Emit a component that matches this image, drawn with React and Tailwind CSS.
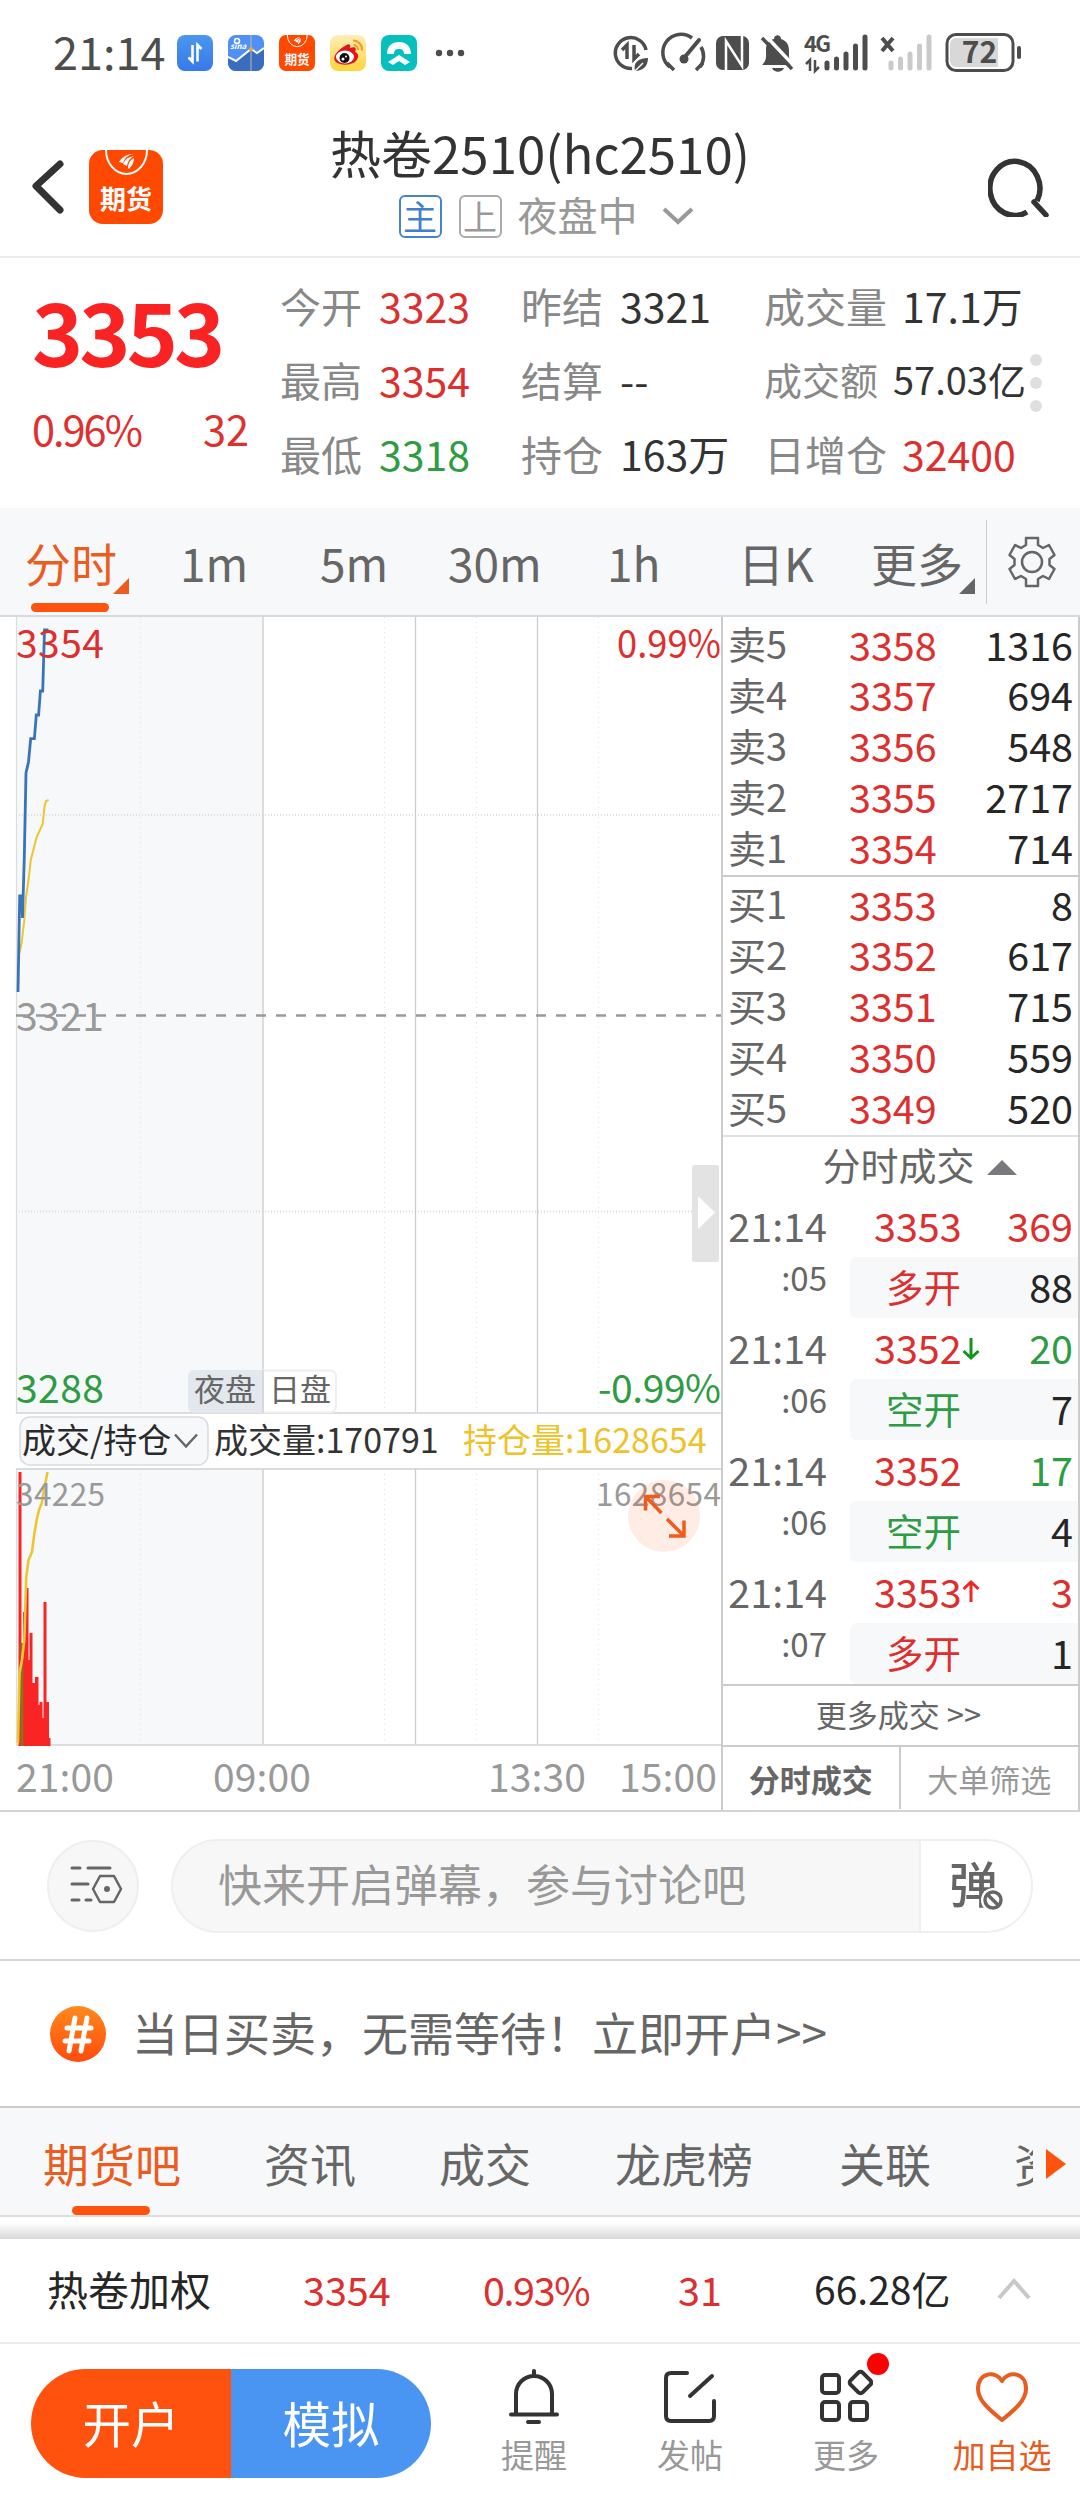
import { useState } from "react";

const SELLS = [
    ["卖5", "3358", "1316"],
    ["卖4", "3357", "694"],
    ["卖3", "3356", "548"],
    ["卖2", "3355", "2717"],
    ["卖1", "3354", "714"],
];

const BUYS = [
    ["买1", "3353", "8"],
    ["买2", "3352", "617"],
    ["买3", "3351", "715"],
    ["买4", "3350", "559"],
    ["买5", "3349", "520"],
];

const TRADES = [
    { sec: ":05", price: "3353", vol: "369", type: "多开", change: "88", up: true },
    { sec: ":06", price: "3352", vol: "20", type: "空开", change: "7", up: false, arrow: "down" },
    { sec: ":06", price: "3352", vol: "17", type: "空开", change: "4", up: false },
    { sec: ":07", price: "3353", vol: "3", type: "多开", change: "1", up: true, arrow: "up" },
];

// x, width, top of every volume bar
const VOLUME_BARS = [
    [18.5, 3, 1472],
    [23, 3, 1612],
    [25.5, 3, 1588],
    [28, 2, 1660],
    [29.5, 3, 1633],
    [32, 3.5, 1683],
    [35, 3.5, 1677],
    [38, 2, 1705],
    [39.5, 3, 1702],
    [42, 2, 1718],
    [43.5, 3, 1602],
    [46, 3, 1702],
    [48.5, 2, 1738],
];

function FuturesLogo({ className }) {
    return (
        <svg viewBox="0 0 74 74" className={className}>
            <rect width="74" height="74" rx="14" fill="#ff4800" />
            <path d="M17 0a20.500 24 0 0 0 41 0" fill="none" stroke="#fff" strokeWidth="2" />
            <path d="M30 12q5-8 14-8q-8 2-10 9zM34 14q3-7 11-8q-6 3-7 10zM39 18q0-7 6-10q0 6-5 11z" fill="#fff" />
            <text x="37" y="59" fontSize="26" fontWeight="700" fill="#fff" textAnchor="middle">期货</text>
        </svg>
    );
}

function StatusBar() {
    return (
        <div className="flex h-[105px] items-center text-[#4d4d4d]">
            <span className="w-[123px] pb-[3px] pl-[53px] text-[45px] leading-[1.3] whitespace-nowrap">21:14</span>
            <div className="ml-[54px] flex gap-[15px]">
                <svg viewBox="0 0 36 36" className="size-9">
                    <defs>
                        <linearGradient id="transfer" x1="0" y1="0" x2="0" y2="1">
                            <stop offset="0" stopColor="#4b97ee" />
                            <stop offset="1" stopColor="#3878ea" />
                        </linearGradient>
                    </defs>
                    <rect width="36" height="36" rx="8" fill="url(#transfer)" />
                    <path d="M15.500 10v16.500l-4-4M20.500 26.500V10l4 4" fill="none" stroke="#fff" strokeWidth="2.600" />
                </svg>
                <svg viewBox="0 0 36 36" className="size-9">
                    <rect width="36" height="36" rx="8" fill="#508ff4" />
                    <path d="M0 22l8 4 15-12 6 4 7-5v15a8 8 0 0 1-8 8H8a8 8 0 0 1-8-8z" fill="#3a6dc0" />
                    <path d="M0 22l8 4 15-12 6 4 7-5" fill="none" stroke="#fff" strokeWidth="2" />
                    <path d="M23 0v36" stroke="#c4b8a8" strokeWidth="1" />
                    <circle cx="23" cy="14" r="2" fill="#f0a030" />
                    <circle cx="9" cy="6" r="2.500" fill="none" stroke="#fff" strokeWidth="1.500" />
                    <text x="2" y="14" fontSize="8" fontStyle="italic" fontWeight="700" fill="#fff">sina</text>
                </svg>
                <FuturesLogo className="size-9" />
                <svg viewBox="0 0 36 36" className="size-9">
                    <defs>
                        <linearGradient id="weibo" x1="0" y1="0" x2="0" y2="1">
                            <stop offset="0" stopColor="#fdeebb" />
                            <stop offset="1" stopColor="#ffd43a" />
                        </linearGradient>
                    </defs>
                    <rect width="36" height="36" rx="8" fill="url(#weibo)" />
                    <path d="M15 11c4-3 6-2 5 2 5-2 7 0 5 4 4 1 4 6 1 9-5 5-17 5-21 0-3-5 4-12 10-15z" fill="#e4141c" />
                    <ellipse cx="15" cy="22" rx="9" ry="6.500" fill="#fff" />
                    <circle cx="14.500" cy="23" r="5" fill="#111" />
                    <circle cx="13" cy="24" r="1.500" fill="#fff" />
                    <circle cx="16" cy="21.500" r="1" fill="#fff" />
                    <path d="M23 5.500a9 9 0 0 1 9 10M23.500 10a5 5 0 0 1 4.500 5" fill="none" stroke="#f0a020" strokeWidth="2.200" />
                </svg>
                <svg viewBox="0 0 36 36" className="size-9">
                    <rect width="36" height="36" rx="8" fill="#06bfbf" />
                    <path d="M6 19C6 11 11 7 18 7s12 4 12 12h-7c0-4-2-5-5-5s-5 1-5 5z" fill="#fff" />
                    <path d="M18 20l11 7-5 3-6-4-6 4-5-3z" fill="#fff" />
                </svg>
            </div>
            <svg viewBox="0 0 32 8" className="ml-[18px] h-2 w-8" fill="currentColor">
                <circle cx="4" cy="4" r="3.200" />
                <circle cx="15" cy="4" r="3.200" />
                <circle cx="26" cy="4" r="3.200" />
            </svg>
            <svg viewBox="0 0 410 44" className="mr-[57px] mb-[2px] ml-auto h-[44px] w-[410px]" fill="none" stroke="currentColor" strokeWidth="3.500">
                <path d="M33 20a15.500 15.500 0 1 0-14 18.500" />
                <path d="M14 29V15l-5 5M21 15v14l5-5" />
                <path d="M22 41c-2-8 3-13 13-13 0 8-5 13-13 13z" fill="currentColor" stroke="none" />
                <path d="M22 41l8-8" stroke="#fff" strokeWidth="1.500" />
                <path d="M57 37a18 18 0 0 1 22-29M87 37a18 18 0 0 0 1-20" />
                <path d="M54 33l7 7M90 33l-7 7" />
                <path d="M71 28L86 10" strokeWidth="4" strokeLinecap="round" />
                <circle cx="71" cy="29" r="4.500" fill="currentColor" stroke="none" />
                <rect x="103" y="6" width="33" height="34" rx="7" fill="currentColor" stroke="none" />
                <path d="M113 40V11l16 25V6" stroke="#fff" strokeWidth="2.500" />
                <path d="M149 35c5-5 4-8 4-16 0-6 5-10 8-10 0-5 7-5 7 0 6 2 8 6 8 12 0 8 0 10 4 14zM159 38h12c-2 5-10 5-12 0z" fill="currentColor" stroke="none" />
                <path d="M152 5l30 32" stroke="#fff" strokeWidth="3.500" />
                <path d="M149 8l30 31" strokeWidth="3.500" />
                <text x="191" y="22" fontSize="22" fontWeight="700" fill="currentColor" stroke="none" textLength="27">4G</text>
                <path d="M197 41V30l-4 4M202 30v11l4-4" strokeWidth="2.500" />
                <path d="M214 38v-5M223.500 38v-9M233 38V24M242.500 38V16M252 38V7" strokeWidth="5" strokeLinecap="round" />
                <path d="M269 8l11 13M280 8l-11 13" strokeWidth="4" />
                <path d="M278 38v-5M287.500 38v-9M297 38V24M306.500 38V16M316 38V7" stroke="#cacaca" strokeWidth="5" strokeLinecap="round" />
                <rect x="334" y="4.500" width="66" height="36" rx="9" strokeWidth="3" />
                <path d="M343 8h42v29h-42a6 6 0 0 1-6-6V14a6 6 0 0 1 6-6z" fill="#d8d8d8" stroke="none" />
                <path d="M406 18v9" strokeWidth="4" strokeLinecap="round" />
                <text x="366.500" y="33" fontSize="30" fontWeight="700" fill="currentColor" stroke="none" textAnchor="middle">72</text>
            </svg>
        </div>
    );
}

function Header() {
    return (
        <header className="flex h-[153px] items-start border-b-2 border-[#ececec]">
            <svg viewBox="0 0 36 60" className="mt-[51px] ml-[30px] h-[60px] w-9" fill="none" stroke="#333" strokeWidth="7" strokeLinecap="round" strokeLinejoin="round">
                <path d="M30 8L6 30l24 24" />
            </svg>
            <FuturesLogo className="mt-[45px] ml-[23px] size-[74px]" />
            <div className="ml-[165px] flex w-[424px] flex-col items-center">
                <h1 className="mt-[21px] text-[51px] leading-[52px] text-[#333] whitespace-nowrap">热卷2510(hc2510)</h1>
                <div className="mt-[13px] ml-3 flex h-[50px] items-center text-[#999]">
                    <span className="flex size-[43px] items-center justify-center rounded-md border-2 border-[#4583cf] text-[34px] leading-none text-[#3f7fcf]">主</span>
                    <span className="ml-[17px] flex size-[43px] items-center justify-center rounded-md border-2 border-[#aaa] text-[34px] leading-none">上</span>
                    <span className="-mt-1 ml-4 text-[40px] leading-none whitespace-nowrap">夜盘中</span>
                    <svg viewBox="0 0 32 20" className="ml-6 h-5 w-8" fill="none" stroke="currentColor" strokeWidth="4">
                        <path d="M2 3l14 13L30 3" />
                    </svg>
                </div>
            </div>
            <svg viewBox="0 0 62 62" className="mt-[50px] mr-[30px] ml-auto size-[62px]" fill="none" stroke="#333" strokeWidth="5.500">
                <path d="M39 57A25 27 0 1 1 49 46" />
                <path d="M46 47l12 13" strokeLinecap="round" />
            </svg>
        </header>
    );
}

function Stat({ label, value, color = "text-[#333]", small, gap = "w-[99px]" }) {
    return (
        <div className={`flex items-center leading-none whitespace-nowrap ${small ? "text-[38px]" : "text-[41px]"}`}>
            <span className={`${gap} shrink-0 text-[#888]`}>{label}</span>
            <span className={color}>{value}</span>
        </div>
    );
}

function Quote() {
    return (
        <section className="flex h-[250px] pt-[10px]">
            <div className="w-[280px] pl-8 text-[#e02f2f]">
                <div className="mt-[18px] text-[87px] leading-none font-bold tracking-[-4px] text-[#fa2323]">3353</div>
                <div className="mt-[35px] flex w-[217px] justify-between text-[41.500px] leading-none">
                    <span className="tracking-[-2px]">0.96%</span>
                    <span>32</span>
                </div>
            </div>
            <div className="grid h-[222px] grid-cols-[241px_243px_270px] grid-rows-3">
                <Stat label="今开" value="3323" color="text-[#de2f2f]" />
                <Stat label="昨结" value="3321" />
                <Stat label="成交量" value="17.1万" gap="w-[138px]" />
                <Stat label="最高" value="3354" color="text-[#de2f2f]" />
                <Stat label="结算" value="--" />
                <Stat label="成交额" value="57.03亿" gap="w-[129px]" small />
                <Stat label="最低" value="3318" color="text-[#2d9c43]" />
                <Stat label="持仓" value="163万" />
                <Stat label="日增仓" value="32400" color="text-[#de2f2f]" gap="w-[138px]" />
            </div>
            <div className="mt-[86px] -ml-1 flex flex-col gap-[11px]">
                <i className="size-3 rounded-full bg-[#dfdfdf]" />
                <i className="size-3 rounded-full bg-[#dfdfdf]" />
                <i className="size-3 rounded-full bg-[#dfdfdf]" />
            </div>
        </section>
    );
}

function PeriodTabs() {
    const [active, setActive] = useState("分时");
    const tabs = ["分时", "1m", "5m", "30m", "1h", "日K", "更多"];
    return (
        <nav className="flex h-[109px] items-center border-b-2 border-[#d8dadc] bg-[#f6f8fa] pl-[25px]">
            <div className="grid h-full w-[961px] grid-cols-[155px_140px_128px_159px_131px_133px_115px]">
                {tabs.map((tab) => (
                    <button
                        key={tab}
                        onClick={() => setActive(tab)}
                        className={`relative flex items-center text-left text-[46px] leading-none whitespace-nowrap ${tab === active ? "text-[#eb5c1e]" : "text-[#666]"}`}
                    >
                        {tab}
                        {(tab === "分时" || tab === "更多") && (
                            <svg viewBox="0 0 16 16" className="mt-[48px] -ml-1 size-4 shrink-0" fill="currentColor">
                                <path d="M16 0v16H0z" />
                            </svg>
                        )}
                        {tab === active && <i className="absolute bottom-[3px] left-[6px] h-[9px] w-[78px] rounded-full bg-[#ff520f]" />}
                    </button>
                ))}
            </div>
            <i className="h-[84px] w-px bg-[#ccc]" />
            <svg viewBox="0 0 48 52" className="ml-[21px] h-[52px] w-12" fill="none" stroke="#666" strokeWidth="2.500" strokeLinejoin="round">
                <path d="M18 2h12v7l5 3 6-3 5.500 10-5 4v6l5 4L41 43l-6-3-5 3v7H18v-7l-5-3-6 3L1.500 33l5-4v-6l-5-4L7 9l6 3 5-3z" />
                <circle cx="24" cy="26" r="10" />
            </svg>
        </nav>
    );
}

function Chart() {
    return (
        <svg viewBox="0 617 721 1193" className="h-[1193px] w-[721px] shrink-0">
            <rect x="16" y="617" width="247" height="796" fill="#f6f8fa" />
            <rect x="16" y="1469" width="247" height="277" fill="#f6f8fa" />
            <g stroke="#e4e4e4" strokeWidth="1.200" strokeDasharray="1 4">
                <path d="M140.500 617v796M384.500 617v796M476.500 617v796M598.500 617v796" />
                <path d="M140.500 1469v276M384.500 1469v276M476.500 1469v276M598.500 1469v276" />
            </g>
            <path d="M16 815h705M16 1211.500h705" stroke="#dedede" strokeWidth="2" strokeDasharray="1 2" />
            <g stroke="#ccc" strokeWidth="1.300">
                <path d="M263 617v796M415.500 617v796M537.500 617v796M263 1469v276M415.500 1469v276M537.500 1469v276" />
                <path d="M16.500 617v796M16.500 1469v276" stroke="#ddd" />
            </g>
            <path d="M16 1413h705M16 1745h705" stroke="#ddd" strokeWidth="2" />
            <path d="M16 1469h705" stroke="#d0d0d0" strokeWidth="1.500" />
            <path d="M16 1015.500h705" stroke="#999" strokeWidth="2.500" strokeDasharray="10 10" />

            {/* average and price lines */}
            <path d="M19.500 953L21.600 943 24.300 920 26 897 28.500 880 30.800 860 36.700 837 42.700 824 44.500 807 46 801 48.700 800" fill="none" stroke="#eec52f" strokeWidth="2" />
            <path d="M18 992L19.700 896h2L22.500 918 24.300 857 26 773 28.500 762 30.700 738.700h3.700L36.300 715h2.300L40.400 691h2.300L44.500 630h4" fill="none" stroke="#3a74b8" strokeWidth="2.800" />

            <g fontSize="39">
                <text x="16" y="658" fill="#de2f2f" textLength="88">3354</text>
                <text x="617" y="658" fill="#de2f2f" textLength="104" lengthAdjust="spacingAndGlyphs">0.99%</text>
                <text x="16" y="1031" fill="#999" textLength="88">3321</text>
                <text x="16" y="1403" fill="#2d9c43" textLength="88">3288</text>
                <text x="598" y="1403" fill="#2d9c43" textLength="123">-0.99%</text>
            </g>

            <path d="M263 1370h-69a6 6 0 0 0-6 6v31a6 6 0 0 0 6 6h69z" fill="#e3e7ee" />
            <path d="M263 1370.500h67a6 6 0 0 1 6 6v30a6 6 0 0 1-6 6h-67z" fill="#fff" stroke="#eee" strokeWidth="2" />
            <path d="M263 1370v43" stroke="#ccc" strokeWidth="1.300" />
            <text x="194" y="1401" fontSize="31" fill="#666">夜盘</text>
            <text x="269" y="1401" fontSize="31" fill="#666">日盘</text>

            <rect x="692" y="1165" width="27" height="97" rx="2" fill="#e3e3e3" />
            <path d="M698 1196l17 16.500-17 16.500z" fill="#fff" />

            {/* indicator row */}
            <rect x="20" y="1417" width="188" height="48" rx="10" fill="#f6f8fa" stroke="#d9dbde" strokeWidth="1.500" />
            <text x="22" y="1453" fontSize="34" fill="#2a2a2a">成交/持仓</text>
            <path d="M175 1434.500l11 12 11-12" fill="none" stroke="#666" strokeWidth="2.500" />
            <text x="214" y="1453" fontSize="34" fill="#333">成交量:170791</text>
            <text x="463" y="1453" fontSize="34" fill="#eec22b">持仓量:1628654</text>

            {/* volume */}
            {VOLUME_BARS.map(([x, w, top]) => (
                <rect key={x} x={x} y={top} width={w} height={1746 - top} fill="#f92525" />
            ))}
            <rect x="20.500" y="1643" width="2.800" height="103" fill="#7d7a1e" />
            <path d="M18 1743L19.500 1673 22 1660 24.300 1640 26.200 1577 28.500 1560 32 1552 34.400 1533 36.700 1520 39 1510 41.800 1503 44 1490 47.500 1472" fill="none" stroke="#eec52f" strokeWidth="2.600" />
            <text x="16" y="1506" fontSize="31.500" fill="#999" textLength="89">34225</text>
            <text x="596" y="1506" fontSize="31.500" fill="#999" textLength="125">1628654</text>
            <circle cx="664" cy="1516" r="36" fill="#ff520f" fillOpacity="0.110" />
            <g fill="none" stroke="#f25a1c" strokeWidth="3.500">
                <path d="M661.500 1513L646 1497M660 1496.500h-14.500v14" />
                <path d="M667 1519l16.500 16.500M684 1520.500v15.500h-15" />
            </g>

            <g fontSize="39" fill="#999">
                <text x="16" y="1792" textLength="98">21:00</text>
                <text x="213" y="1792" textLength="98">09:00</text>
                <text x="488" y="1792" textLength="98">13:30</text>
                <text x="619" y="1792" textLength="98">15:00</text>
            </g>
        </svg>
    );
}

function BookRows({ rows }) {
    return rows.map(([label, price, amount]) => (
        <div key={label} className="flex h-[50.800px] items-center text-[38px] leading-none">
            <span className="w-[121px] text-[#666]">{label}</span>
            <span className="text-[39.500px] text-[#de2f2f]">{price}</span>
            <span className="ml-auto text-[39.500px] text-[#262626]">{amount}</span>
        </div>
    ));
}

function OrderBook() {
    return (
        <aside className="w-[359px] border-x-2 border-[#ccc]">
            <div className="h-[260px] border-b-2 border-[#ccc] px-[5px] pt-px">
                <BookRows rows={SELLS} />
            </div>
            <div className="h-[260px] border-b-2 border-[#e0e0e0] px-[5px] pt-px">
                <BookRows rows={BUYS} />
            </div>
            <div className="flex h-[59px] items-center justify-center pb-[5px] pl-[38px] text-[38px] leading-none text-[#666]">
                分时成交
                <svg viewBox="0 0 30 16" className="mt-2 ml-3 h-4 w-[30px]" fill="#77797c">
                    <path d="M15 0l15 15H0z" />
                </svg>
            </div>
            {TRADES.map((t) => (
                <div key={t.sec + t.vol} className="flex h-[122px] text-[39.500px] leading-none">
                    <div className="flex w-[104px] flex-col items-end text-[#666]">
                        <span className="flex h-[58px] items-center text-[39.500px]">21:14</span>
                        <span className="flex h-[40px] items-center pt-1.5 text-[33px]">{t.sec}</span>
                    </div>
                    <div className="ml-[23px] flex-1">
                        <div className="flex h-[58px] items-center pr-[5px] pl-6">
                            <span className="text-[#de2f2f]">{t.price}</span>
                            {t.arrow === "down" && (
                                <svg viewBox="0 0 18 24" className="mt-1 h-6 w-[18px]" fill="none" stroke="#12951c" strokeWidth="3">
                                    <path d="M9 1v20M1.500 14L9 21l7.500-7" />
                                </svg>
                            )}
                            {t.arrow === "up" && (
                                <svg viewBox="0 0 18 24" className="h-6 w-[18px]" fill="none" stroke="#f02626" strokeWidth="3">
                                    <path d="M9 23V3M1.500 10L9 3l7.500 7" />
                                </svg>
                            )}
                            <span className={`ml-auto ${t.up ? "text-[#de2f2f]" : "text-[#2d9c43]"}`}>{t.vol}</span>
                        </div>
                        <div className="mt-[3px] flex h-[61px] items-center justify-between rounded-l-md bg-[#f6f8fa] pr-[5px] pb-[4px] pl-9">
                            <span className={`text-[37.500px] ${t.up ? "text-[#de2f2f]" : "text-[#2d9c43]"}`}>{t.type}</span>
                            <span className="text-[#262626]">{t.change}</span>
                        </div>
                    </div>
                </div>
            ))}
            <button className="flex h-[61px] w-full items-center justify-center border-t-2 border-[#ccc] pr-1 pb-1 text-[31px] leading-none text-[#666]">
                更多成交 &gt;&gt;
            </button>
            <div className="grid h-[64px] grid-cols-2 border-t-2 border-[#ccc] text-[31px] leading-none">
                <button className="border-r-2 border-[#ccc] font-bold text-[#666]">分时成交</button>
                <button className="text-[#999]">大单筛选</button>
            </div>
        </aside>
    );
}

function DanmuBar() {
    return (
        <section className="flex h-[151px] items-center border-y-2 border-[#d4d4d4] pl-[47px]">
            <button className="flex size-[92px] items-center justify-center rounded-full border-2 border-[#efefef] bg-[#f7f7f7]">
                <svg viewBox="0 0 54 42" className="mb-1 ml-1.5 h-[42px] w-[54px]" fill="none" stroke="#666" strokeWidth="3" strokeLinecap="round" strokeLinejoin="round">
                    <path d="M3 5h8M19 5h22M3 21h16M3 37h7M17 37h5" />
                    <path d="M31 13h14l7 13-7 13H31l-7-13z" strokeWidth="2.500" />
                    <circle cx="38" cy="26" r="3" fill="#666" stroke="none" />
                </svg>
            </button>
            <div className="ml-[32px] flex h-[94px] w-[862px] items-center overflow-hidden rounded-full border-2 border-[#efefef] bg-[#f7f7f7] pl-[45px]">
                <span className="flex-1 pb-[5px] text-[44px] leading-none text-[#999]">快来开启弹幕，参与讨论吧</span>
                <button className="relative flex h-full w-[112px] items-center border-l-2 border-[#efefef] bg-white pb-2 pl-[28px] text-[49px] leading-none font-medium text-[#666]">
                    弹
                    <svg viewBox="0 0 24 24" className="absolute top-[47px] left-[60px] size-6">
                        <circle cx="12" cy="12" r="12" fill="#fff" />
                        <circle cx="12" cy="12" r="8" fill="none" stroke="#666" strokeWidth="3.500" />
                        <path d="M6 6l12 12" stroke="#666" strokeWidth="3.500" />
                    </svg>
                </button>
            </div>
        </section>
    );
}

function Promo() {
    return (
        <section className="flex h-[147px] items-center border-b-2 border-[#ccc] pl-[50px]">
            <svg viewBox="0 0 56 56" className="size-14">
                <defs>
                    <linearGradient id="topic" x1="0" y1="0" x2="0" y2="1">
                        <stop offset="0" stopColor="#ff8a1c" />
                        <stop offset="1" stopColor="#ff4a0c" />
                    </linearGradient>
                </defs>
                <circle cx="28" cy="28" r="28" fill="url(#topic)" />
                <path d="M25 12l-6 33M37 12l-6 33M17 22h24M15 35h24" stroke="#fff" strokeWidth="5" strokeLinecap="round" />
            </svg>
            <p className="ml-[26px] pb-[5px] text-[46px] leading-none text-[#666]">当日买卖，无需等待！立即开户&gt;&gt;</p>
        </section>
    );
}

function ContentTabs() {
    return (
        <>
            <nav className="flex h-[109px] items-center border-b-2 border-[#ddd] bg-[#f6f8fa] pl-[43px] text-[46px] leading-none text-[#666]">
                <div className="grid w-[990px] grid-cols-[221px_175px_176px_224px_175px_19px] overflow-hidden whitespace-nowrap">
                    <span className="relative flex h-[107px] items-center text-[#eb5c1e]">
                        期货吧
                        <i className="absolute bottom-0 left-[29px] h-[9px] w-[78px] rounded-full bg-[#ff520f]" />
                    </span>
                    <span className="flex items-center">资讯</span>
                    <span className="flex items-center">成交</span>
                    <span className="flex items-center">龙虎榜</span>
                    <span className="flex items-center">关联</span>
                    <span className="flex items-center overflow-hidden">资</span>
                </div>
                <svg viewBox="0 0 20 30" className="mt-1 ml-[13px] h-[30px] w-5" fill="#ff520f">
                    <path d="M0 0l20 15L0 30z" />
                </svg>
            </nav>
            <div className="flex h-[22px] flex-col justify-end">
                <i className="h-4 bg-gradient-to-b from-white to-[#d9d9d9]" />
            </div>
        </>
    );
}

function IndexRow() {
    return (
        <section className="flex h-[105px] items-center border-b-2 border-[#ececec] pb-[4px] pl-[47px] text-[39.500px] leading-none text-[#de2f2f] whitespace-nowrap">
            <span className="w-[256px] text-[41px] text-[#262626]">热卷加权</span>
            <span className="w-[180px]">3354</span>
            <span className="w-[195px] tracking-[-1.400px]">0.93%</span>
            <span className="w-[136px]">31</span>
            <span className="w-[183px] text-[39px] text-[#262626]">66.28亿</span>
            <svg viewBox="0 0 34 22" className="h-[22px] w-[34px]" fill="none" stroke="#c8c8c8" strokeWidth="4">
                <path d="M2 20L17 3l15 17" />
            </svg>
        </section>
    );
}

function BottomNav() {
    return (
        <footer className="flex h-[160px] pt-[25px] pl-[31px]">
            <div className="flex h-[109px] w-[400px] overflow-hidden rounded-full text-[48.500px] leading-none text-white">
                <button className="w-1/2 bg-[#ff520f] pb-[3px]">开户</button>
                <button className="w-1/2 bg-[#4b95f2] pb-[3px]">模拟</button>
            </div>
            <div className="ml-[25px] grid h-[109px] grid-cols-[156px_156px_156px_156px] text-[33px] leading-none text-[#999]">
                <button className="flex flex-col items-center">
                    <svg viewBox="0 0 54 56" className="h-14 w-[54px]" fill="none" stroke="#333" strokeWidth="4" strokeLinecap="round">
                        <path d="M27 2v4M9 45V25a18 18 0 0 1 36 0v20M4 45.500h46M21 53h11" />
                    </svg>
                    <span className="mt-[13px]">提醒</span>
                </button>
                <button className="flex flex-col items-center">
                    <svg viewBox="0 0 54 56" className="h-14 w-[54px]" fill="none" stroke="#333" strokeWidth="4" strokeLinecap="round">
                        <path d="M24 4H8q-5 0-5 5v38q0 5 5 5h38q5 0 5-5V32M27 27L49 7" />
                    </svg>
                    <span className="mt-[13px]">发帖</span>
                </button>
                <button className="relative flex flex-col items-center">
                    <svg viewBox="0 0 54 56" className="h-14 w-[54px]" fill="none" stroke="#333" strokeWidth="4">
                        <rect x="3" y="6" width="17" height="18" rx="3" />
                        <rect x="3" y="33" width="17" height="18" rx="3" />
                        <rect x="31" y="33" width="17" height="18" rx="3" />
                        <rect x="33" y="5" width="17" height="17" rx="3" transform="rotate(45 41.500 13.500)" />
                    </svg>
                    <span className="mt-[13px]">更多</span>
                    <i className="absolute -top-4 left-[99px] size-[22px] rounded-full bg-[#f00]" />
                </button>
                <button className="flex flex-col items-center text-[#e85d1f]">
                    <svg viewBox="0 0 54 56" className="h-14 w-[54px]" fill="none" stroke="currentColor" strokeWidth="4" strokeLinejoin="round">
                        <path d="M27 12C22 2 3 2 3 20c0 12 13 22 24 31 11-9 24-19 24-31C51 2 32 2 27 12z" />
                    </svg>
                    <span className="mt-[13px]">加自选</span>
                </button>
            </div>
        </footer>
    );
}

export default function App() {
    return (
        <div className="h-[2504px] w-[1080px] overflow-hidden bg-white font-['Noto_Sans_CJK_SC',sans-serif]">
            <StatusBar />
            <Header />
            <Quote />
            <PeriodTabs />
            <main className="flex h-[1193px]">
                <Chart />
                <OrderBook />
            </main>
            <DanmuBar />
            <Promo />
            <ContentTabs />
            <IndexRow />
            <BottomNav />
        </div>
    );
}
